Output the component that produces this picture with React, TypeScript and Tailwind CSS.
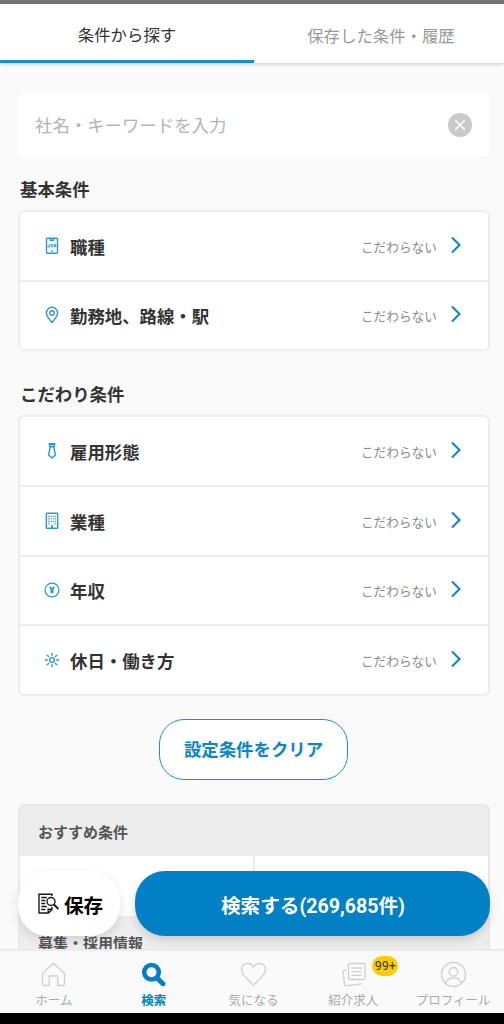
import * as React from 'react';
import { clsx } from 'clsx';

interface IConditionRow {
    label: string;
    icon: React.ReactNode;
}

interface IConditionCardProps {
    rows: IConditionRow[];
    className?: string;
}

const JobIcon = () => (
    <svg viewBox="0 0 16 18" className="w-4 h-[18px]" fill="none" stroke="#2a98d8" strokeWidth="1.4">
        <rect x="2.5" y="1.3" width="11" height="15" rx="1" />
        <path d="M6.5 1.8v1.4h3V1.8M7.2 14h1.6" />
        <path d="M5.3 7v3H3.9V8.900M7 7.400h1.800v2.400H7zM10.300 7.400h1.600v2.400h-1.600zM10.300 8.600h1.600" strokeWidth="0.9" />
    </svg>
);

const PinIcon = () => (
    <svg viewBox="0 0 16 18" className="w-4 h-[18px]" fill="none" stroke="#2a98d8" strokeWidth="1.4">
        <path d="M8 16.5C5.6 13.5 2.4 10.4 2.4 6.9a5.6 5.6 0 0 1 11.2 0c0 3.5-3.2 6.6-5.6 9.6z" strokeLinejoin="round" />
        <circle cx="8" cy="7" r="2.2" />
    </svg>
);

const TieIcon = () => (
    <svg viewBox="0 0 16 18" className="w-4 h-[18px]" fill="none" stroke="#2a98d8" strokeWidth="1.4" strokeLinejoin="round">
        <path d="M5.2 1.6h5.6L10 4.800H6z" />
        <path d="M6.2 4.800 4.6 13 8 16l3.4-3L9.8 4.800" />
        <path d="M5.5 2.5h5" />
    </svg>
);

const BuildingIcon = () => (
    <svg viewBox="0 0 16 18" className="w-4 h-[18px]" fill="none" stroke="#2a98d8" strokeWidth="1.4">
        <rect x="2.3" y="1.3" width="11.4" height="15" rx="0.8" />
        <path d="M4.3 4.3h1.500m1 0h1m1 0h1m1 0h1.200M4.300 6.800h1.500m1 0h1m1 0h1m1 0h1.200M4.300 9.300h1.500m1 0h1m1 0h1m1 0h1.200M4.300 11.800h1.500m4.900 0h1.300" strokeWidth="1.2" />
        <path d="M8 16.300v-3.200" strokeWidth="1.8" />
    </svg>
);

const YenIcon = () => (
    <svg viewBox="0 0 16 18" className="w-4 h-[18px]" fill="none" stroke="#2a98d8" strokeWidth="1.3">
        <circle cx="8" cy="9" r="6.9" />
        <path d="M5.8 5.8 8 8.8l2.2-3M8 8.5v4" strokeWidth="1.6" />
        <path d="M6 9.1h4M6 10.9h4" strokeWidth="1" />
    </svg>
);

const SunIcon = () => (
    <svg viewBox="0 0 16 18" className="w-4 h-[18px]" fill="none" stroke="#2a98d8" strokeWidth="1.4">
        <circle cx="8" cy="9" r="2.4" />
        <path d="M8 1.8v3M8 13.2v3M.8 9h3M12.2 9h3M2.9 3.9l2.2 2.2M10.9 11.9l2.2 2.2M13.1 3.9l-2.2 2.2M5.1 11.9l-2.2 2.2" />
    </svg>
);

const ConditionCard: React.FunctionComponent<IConditionCardProps> = ({ rows, className }) => {
    return (
        <div className={clsx('flex flex-col rounded-md border-2 border-[#ededed] divide-y-2 divide-[#ededed] bg-white', className)}>
            {rows.map((row) => (
                <button key={row.label} className="flex flex-1 items-center pl-6 pr-[26px] text-left">
                    {row.icon}
                    <span className="ml-[10px] pt-1 text-[17.4px] leading-6 font-bold text-[#333]">{row.label}</span>
                    <span className="ml-auto pt-1 text-[12.7px] leading-5 text-[#8c8c8c]">こだわらない</span>
                    <svg viewBox="0 0 12 18" className="mb-[2px] ml-[13px] w-3 h-[18px]" fill="none" stroke="#0a86cb" strokeWidth="2.1">
                        <path d="M2 1.5 9.5 9 2 16.5" />
                    </svg>
                </button>
            ))}
        </div>
    );
};

const basicRows: IConditionRow[] = [
    { label: '職種', icon: <JobIcon /> },
    { label: '勤務地、路線・駅', icon: <PinIcon /> },
];

const detailRows: IConditionRow[] = [
    { label: '雇用形態', icon: <TieIcon /> },
    { label: '業種', icon: <BuildingIcon /> },
    { label: '年収', icon: <YenIcon /> },
    { label: '休日・働き方', icon: <SunIcon /> },
];

const navItems = [
    {
        label: 'ホーム',
        icon: <path d="M2.500 12.200 13.500 2.200 24.500 12.200V23a1.500 1.500 0 0 1-1.500 1.500h-5.200V15H9.200v9.500H4A1.500 1.500 0 0 1 2.500 23z" />,
    },
    {
        label: '検索',
        active: true,
        icon: (
            <>
                <circle cx="11.500" cy="11.300" r="7.300" strokeWidth="4.500" />
                <path d="m17.300 17.200 5.700 5.500" strokeWidth="5" />
            </>
        ),
    },
    {
        label: '気になる',
        icon: <path d="M13.500 24C10 20.500 1.500 14.500 1.500 8.800a6.300 6.300 0 0 1 12-2.600A6.300 6.300 0 0 1 25.500 8.800c0 5.700-8.500 11.700-12 15.200z" />,
    },
    {
        label: '紹介求人',
        badge: '99+',
        icon: (
            <>
                <rect x="8.500" y="2.500" width="16.500" height="16" rx="1.200" />
                <path d="M12 7H21.500M12 10.700H21.500M12 14.400H21.500M6 9.200 3 9.700 4.500 23.900a1 1 0 0 0 1.200.9L21.500 22.800" />
            </>
        ),
    },
    {
        label: 'プロフィール',
        icon: (
            <>
                <circle cx="13.500" cy="13.500" r="12" />
                <circle cx="13.500" cy="10.800" r="4.300" />
                <path d="M5.500 22.300c1.300-4 4.400-5.500 8-5.500s6.700 1.500 8 5.500" />
            </>
        ),
    },
];

const BottomNav = () => {
    return (
        <nav className="flex h-[64px] shrink-0 items-start border-t-2 border-[#ebebeb] bg-[#fafafa] pr-px pl-1">
            {navItems.map((item) => (
                <div key={item.label} className="relative flex h-full flex-1 flex-col items-center pt-[10px]">
                    <svg
                        viewBox="0 0 27 27"
                        className={clsx('h-[27px] w-[27px] overflow-visible', item.active ? 'stroke-[#0180c6]' : 'stroke-[#cfcfcf]')}
                        fill="none"
                        strokeWidth="1.3"
                        strokeLinecap="round"
                        strokeLinejoin="round"
                    >
                        {item.icon}
                    </svg>
                    <span
                        className={clsx(
                            'mt-[3px] text-[12.5px] leading-5 whitespace-nowrap',
                            item.active ? 'font-bold text-[#0180c6]' : 'text-[#aaa]'
                        )}
                    >
                        {item.label}
                    </span>
                    {item.badge && (
                        <span className="absolute top-[5px] left-[69px] flex h-5 w-[26px] items-center justify-center rounded-full bg-[#ffcc00] font-[Roboto] text-[12.5px] text-[#333]">
                            {item.badge}
                        </span>
                    )}
                </div>
            ))}
        </nav>
    );
};

const FloatingActions = () => {
    return (
        <div className="absolute top-[871px] left-[18px] flex w-[472px] justify-between">
            <button className="flex h-[65px] w-[102px] items-center rounded-[30px] bg-white pl-5 shadow-[0_4px_10px_rgba(0,0,0,0.12)]">
                <svg viewBox="0 0 21 21" className="h-[21px] w-[21px]" fill="none" stroke="#1a1a1a" strokeWidth="1.4">
                    <path d="M14 3V1.200H1V20h9.500l3.500-3.500V14" />
                    <path d="M10.200 20v-3.800H14M3.300 4.500h5.500M3.300 7.500h4M3.300 10.500h4M3.300 13.500h5.500M3.300 16.500h4" />
                    <circle cx="13" cy="8.500" r="4" />
                    <path d="m16 11.500 4.300 4.500" strokeWidth="1.900" />
                </svg>
                <span className="ml-[5px] pt-[6px] text-[19.6px] leading-7 font-bold text-black">保存</span>
            </button>
            <button className="flex h-[65px] w-[355px] items-center justify-center rounded-[30px] bg-[#0180c6] pt-[6px] pl-px text-[19.6px] font-bold text-white shadow-[0_4px_10px_rgba(0,0,0,0.14)]">
                検索する(269,685件)
            </button>
        </div>
    );
};

const App: React.FunctionComponent = () => {
    return (
        <div className="relative flex h-[1024px] w-[504px] flex-col overflow-hidden bg-[#fafafa] font-[Roboto,'Noto_Sans_CJK_JP',sans-serif]">
            <div className="h-1 shrink-0 bg-[#757575]" />
            <header className="flex h-[59px] shrink-0 bg-white text-[16.400px] shadow-[0_1px_4px_rgba(0,0,0,0.2)]">
                <div className="flex w-[254px] items-center justify-center border-b-[3px] border-[#1a8dcd] pt-[9px] text-[#333]">
                    条件から探す
                </div>
                <div className="flex flex-1 items-center justify-center pt-[7px] pl-1 text-[#999]">
                    保存した条件・履歴
                </div>
            </header>

            <main className="min-h-0 flex-1 overflow-hidden pr-[14px] pl-[18px]">
                <div className="mt-[31px] flex h-[62px] items-center justify-between rounded-md bg-white pr-[18px] pl-[17px]">
                    <span className="pt-[2px] text-[17.400px] text-[#b3b3b3]">社名・キーワードを入力</span>
                    <svg viewBox="0 0 24 24" className="h-6 w-6" fill="none" stroke="white" strokeWidth="1.600">
                        <circle cx="12" cy="12" r="12" fill="#c9c9c9" stroke="none" />
                        <path d="m7.300 7.300 9.400 9.400m0-9.400-9.400 9.400" />
                    </svg>
                </div>

                <h2 className="mt-[22px] h-8 pl-[2px] text-[17.400px] leading-6 font-bold text-[#333]">基本条件</h2>
                <ConditionCard rows={basicRows} className="h-[141px]" />

                <h2 className="mt-8 h-8 pl-[2px] text-[17.400px] leading-6 font-bold text-[#333]">こだわり条件</h2>
                <ConditionCard rows={detailRows} className="h-[281px]" />

                <button className="ml-[141px] mt-[23px] flex h-[61px] w-[189px] items-center justify-center rounded-[25px] border-[1.5px] border-[#1b8fce] bg-white pt-[2px] text-[17.400px] font-bold text-[#0a86c8]">
                    設定条件をクリア
                </button>

                <section className="mt-6 rounded-t-md border-2 border-[#e9e9e9] bg-[#ededed] text-[15px] font-bold text-[#555]">
                    <h3 className="flex h-[50px] items-center pt-1 pl-[18px]">おすすめ条件</h3>
                    <div className="flex h-[60px] divide-x-2 divide-[#ebebeb] bg-white">
                        <div className="w-[235px]" />
                        <div className="flex-1" />
                    </div>
                    <h3 className="flex h-[54px] items-center pt-[3px] pl-[18px]">募集・採用情報</h3>
                </section>
            </main>

            <FloatingActions />
            <BottomNav />
            <div className="h-[11px] shrink-0 bg-black" />
        </div>
    );
};

export default App;
